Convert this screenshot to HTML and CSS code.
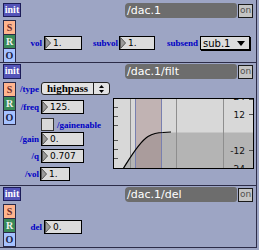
FILE: index.html
```html
<!DOCTYPE html>
<html>
<head>
<meta charset="utf-8">
<link rel="stylesheet" href="styles.css">
</head>
<body>
<div class="module m1">
  <div class="side">
    <div class="init">init</div>
    <div class="sro s">S</div>
    <div class="sro r">R</div>
    <div class="sro o">O</div>
  </div>
  <div class="main">
    <div class="head"><div class="title">/dac.1</div><div class="on">on</div></div>
    <div class="row">
      <span class="lbl lw23">vol</span>
      <div class="num w37"><svg class="tri" width="6" height="12" viewBox="0 0 6 12"><polygon points="0.5,0.5 5.5,6 0.5,11.5" /></svg><span>1.</span></div>
      <span class="lbl lw37">subvol</span>
      <div class="num w35 ml1"><svg class="tri" width="6" height="12" viewBox="0 0 6 12"><polygon points="0.5,0.5 5.5,6 0.5,11.5" /></svg><span>1.</span></div>
      <span class="lbl lw43">subsend</span>
      <div class="menu"><span>sub.1</span><svg class="arrow" width="8" height="5" viewBox="0 0 8 5"><polygon points="0,0 8,0 4,5"/></svg></div>
    </div>
  </div>
</div>

<div class="module m2">
  <div class="side">
    <div class="init">init</div>
    <div class="sro s">S</div>
    <div class="sro r">R</div>
    <div class="sro o">O</div>
  </div>
  <div class="main">
    <div class="head"><div class="title">/dac.1/filt</div><div class="on">on</div></div>
    <div class="body2">
      <div class="form">
        <span class="flbl">/type</span>
        <div class="umenu"><span class="utext">highpass</span><span class="usep"><svg width="5" height="8" viewBox="0 0 5 8"><polygon points="2.5,0 5,3 0,3"/><polygon points="0,5 5,5 2.5,8"/></svg></span></div>
        <span class="flbl">/freq</span>
        <div class="num w43"><svg class="tri" width="6" height="12" viewBox="0 0 6 12"><polygon points="0.5,0.5 5.5,6 0.5,11.5" /></svg><span>125.</span></div>
        <span class="flbl"></span>
        <div class="chkrow"><span class="chk"></span><span class="lbl">/gainenable</span></div>
        <span class="flbl">/gain</span>
        <div class="num w43"><svg class="tri" width="6" height="12" viewBox="0 0 6 12"><polygon points="0.5,0.5 5.5,6 0.5,11.5" /></svg><span>0.</span></div>
        <span class="flbl">/q</span>
        <div class="num w43"><svg class="tri" width="6" height="12" viewBox="0 0 6 12"><polygon points="0.5,0.5 5.5,6 0.5,11.5" /></svg><span>0.707</span></div>
        <span class="flbl">/vol</span>
        <div class="num w30 shiftl"><svg class="tri" width="6" height="12" viewBox="0 0 6 12"><polygon points="0.5,0.5 5.5,6 0.5,11.5" /></svg><span>1.</span></div>
      </div>
      <svg class="graph" width="141" height="71" viewBox="0 0 141 71">
        <rect x="0" y="0" width="141" height="71" fill="#d8d8d8"/>
        <path d="M10,71 C17,60 26,44 35,38.5 C40,35.5 44,34.5 50,34.5 L141,34.5 L141,71 Z" fill="#b4b4b4"/>
        <rect x="22" y="0" width="26" height="71" fill="#987070" fill-opacity="0.35"/>
        <g stroke="#8e8e8e" stroke-width="1">
          <line x1="17.5" y1="0" x2="17.5" y2="71"/>
          <line x1="63.5" y1="0" x2="63.5" y2="71"/>
          <line x1="110.5" y1="0" x2="110.5" y2="71"/>
        </g>
        <g stroke="#7880b0" stroke-width="1">
          <line x1="22.5" y1="0" x2="22.5" y2="71"/>
          <line x1="48.5" y1="0" x2="48.5" y2="71"/>
        </g>
        <g stroke="#555" stroke-width="1">
          <line x1="0" y1="9.5" x2="5" y2="9.5"/>
          <line x1="0" y1="18.5" x2="5" y2="18.5"/>
          <line x1="0" y1="27.5" x2="5" y2="27.5"/>
          <line x1="0" y1="42.5" x2="5" y2="42.5"/>
          <line x1="0" y1="51.5" x2="5" y2="51.5"/>
          <line x1="0" y1="60.5" x2="5" y2="60.5"/>
          <line x1="136" y1="16.5" x2="141" y2="16.5"/>
          <line x1="136" y1="52.5" x2="141" y2="52.5"/>
          <line x1="136" y1="1.5" x2="141" y2="1.5"/>
        </g>
        <path d="M10,71 C17,60 26,44 35,38.5 C40,35.5 44,34.5 50,34.5 L58,34" fill="none" stroke="#000" stroke-width="1.2"/>
        <g class="gtext">
          <text x="132" y="1.5" text-anchor="end">24</text>
          <text x="132" y="20" text-anchor="end">12</text>
          <text x="132" y="56" text-anchor="end">-12</text>
          <text x="132" y="74" text-anchor="end">-24</text>
        </g>
        <rect x="0.5" y="0.5" width="140" height="70" fill="none" stroke="#000"/>
      </svg>
    </div>
  </div>
</div>

<div class="module m3">
  <div class="side">
    <div class="init">init</div>
    <div class="sro s">S</div>
    <div class="sro r">R</div>
    <div class="sro o">O</div>
  </div>
  <div class="main">
    <div class="head"><div class="title">/dac.1/del</div><div class="on">on</div></div>
    <div class="row">
      <span class="lbl lw23">del</span>
      <div class="num w37"><svg class="tri" width="6" height="12" viewBox="0 0 6 12"><polygon points="0.5,0.5 5.5,6 0.5,11.5" /></svg><span>0.</span></div>
    </div>
  </div>
</div>
</body>
</html>
```

FILE: styles.css
```css
html { background: #9da5c4; }
body {
  margin: 0;
  width: 259px;
  font-family: "DejaVu Sans", sans-serif;
}
.module {
  display: flex;
  box-sizing: border-box;
  width: 257px;
  background: #9da5c4;
  border-right: 1px solid #2c2c48;
  border-bottom: 1px solid #2c2c48;
  overflow: hidden;
}
.m1 { height: 63px; padding-top: 3px; }
.m2 { height: 123px; padding-top: 1px; }
.m3 { height: 62px; padding-top: 1px; }

.side {
  flex: none;
  width: 21px;
  box-sizing: border-box;
  padding-left: 3px;
  display: flex;
  flex-direction: column;
}
.init {
  width: 18px;
  height: 15px;
  box-sizing: border-box;
  background: #5454b8;
  border: 1px solid #1c1c58;
  color: #fff;
  font: bold 10px "Liberation Serif", serif;
  line-height: 12px;
  text-align: center;
  margin-bottom: 3px;
}
.sro {
  width: 13px;
  height: 15px;
  box-sizing: border-box;
  border: 1px solid #2a2a48;
  font: bold 10px "Liberation Serif", serif;
  line-height: 13px;
  text-align: center;
}
.sro + .sro { margin-top: -1px; }
.s { background: #ffb48e; color: #6a2a2a; }
.r { background: #3a8a58; color: #f0f0f0; }
.o { background: #a6c2ff; color: #1a1a40; }

.main {
  flex: 1;
  display: flex;
  flex-direction: column;
}
.head {
  display: flex;
  justify-content: flex-end;
  gap: 1px;
  padding-right: 3px;
  height: 15px;
}
.title {
  width: 112px;
  height: 15px;
  box-sizing: border-box;
  background: #6d6d6d;
  border-radius: 4px 3px 3px 4px;
  color: #fff;
  font-size: 11px;
  line-height: 15px;
  padding-left: 2px;
  white-space: nowrap;
}
.on {
  width: 15px;
  height: 14px;
  margin-top: 1px;
  box-sizing: border-box;
  background: #c4c4c4;
  border: 1px solid #1a1a1a;
  color: #505050;
  font-size: 9px;
  line-height: 11px;
  text-align: center;
}

.row {
  display: flex;
  align-items: center;
  margin-top: 18px;
  height: 14px;
}
.lbl {
  font: bold 9px "Liberation Serif", serif;
  color: #0000c4;
  white-space: nowrap;
}
.lw23, .lw37, .lw43 {
  display: flex;
  justify-content: flex-end;
  margin-right: 2px;
}
.lw23 { width: 21px; }
.lw37 { width: 36px; }
.lw43 { width: 43px; }

.num {
  display: flex;
  align-items: center;
  height: 14px;
  box-sizing: border-box;
  background: #dcdcdc;
  border: 1px solid #000;
  font-size: 9px;
  color: #000;
}
.num span { margin-left: 2px; }
.tri { flex: none; margin-left: 0; }
.tri polygon { fill: #9a9a9a; stroke: #555; stroke-width: 1; }
.w37 { width: 38px; }
.w35 { width: 36px; }
.w43 { width: 43px; }
.w30 { width: 30px; }
.ml1 { margin-left: -1px; }
.shiftl { margin-left: -1px; }

.menu {
  display: flex;
  align-items: center;
  justify-content: space-between;
  width: 50px;
  height: 14px;
  box-sizing: border-box;
  background: #dcdcdc;
  border: 1px solid #000;
  box-shadow: 1px 1px 0 #000;
  font-size: 10px;
  padding: 0 4px 0 2px;
}
.arrow polygon { fill: #000; }

.body2 {
  display: flex;
  align-items: flex-start;
}
.form {
  width: 92px;
  flex: none;
  margin-top: 3px;
  display: grid;
  grid-template-columns: 18px auto;
  grid-template-rows: 18px 18px 14px 17px 18px 14px;
  column-gap: 2px;
  align-items: start;
}
.flbl {
  display: flex;
  justify-content: flex-end;
  height: 14px;
  align-items: center;
  font: bold 9px "Liberation Serif", serif;
  color: #0000c4;
  white-space: nowrap;
}
.umenu {
  display: flex;
  width: 69px;
  height: 13px;
  box-sizing: border-box;
  border: 1px solid #222;
  border-radius: 3px;
  background: #e2e2e2;
}
.utext {
  flex: 1;
  font: bold 11px "Liberation Serif", serif;
  line-height: 11px;
  padding-left: 5px;
  color: #000;
}
.usep {
  width: 15px;
  border-left: 1px solid #222;
  display: flex;
  align-items: center;
  justify-content: center;
}
.usep polygon { fill: #000; }
.chkrow {
  display: flex;
  align-items: flex-start;
  gap: 3px;
}
.chk {
  width: 13px;
  height: 13px;
  box-sizing: border-box;
  background: #d8d8d8;
  border: 1px solid #333;
}
.chkrow .lbl { line-height: 13px; margin-top: 1px; }

.graph {
  display: block;
  margin-top: 19px;
  flex: none;
}
.gtext text {
  font-family: "DejaVu Sans", sans-serif;
  font-size: 9px;
  fill: #111;
}
```
